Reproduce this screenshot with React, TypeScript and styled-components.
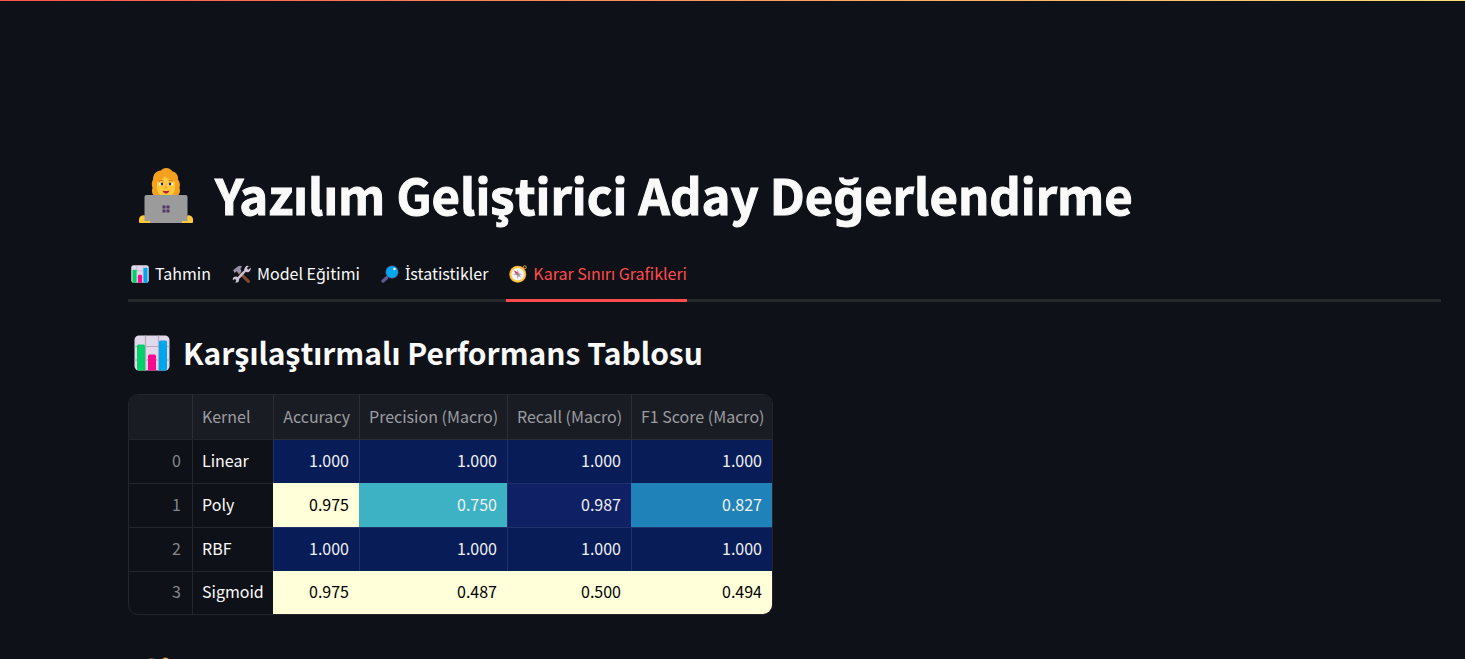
import React from 'react';
import styled, { createGlobalStyle } from 'styled-components';

const GlobalStyle = createGlobalStyle`
  * { box-sizing: border-box; }
  body {
    margin: 0;
    background: #0e1117;
    color: #fafafa;
    font-family: "Noto Sans CJK SC", "Noto Sans", sans-serif;
    font-size: 16px;
  }
`;

const Decoration = styled.div`
  position: absolute;
  top: 0;
  left: 0;
  right: 0;
  height: 1px;
  background: linear-gradient(90deg, #ff544b, #fbe074);
`;

const Page = styled.main`
  position: relative;
  height: 100vh;
  overflow: auto;
  scrollbar-width: none;
  padding: 160px 24px 0 128px;
`;

const Title = styled.h1`
  display: flex;
  align-items: center;
  gap: 18px;
  margin: 0;
  padding-left: 5px;
  height: 72px;
  font-size: 49px;
  line-height: 68px;
  font-weight: 700;
`;

const TitleText = styled.span`
  padding-bottom: 4px;
  -webkit-text-stroke: 1px currentColor;
`;

const TabList = styled.div`
  display: flex;
  gap: 18px;
  margin-top: 16px;
  height: 54px;
  border-bottom: 3px solid #26282c;
`;

const Tab = styled.button<{ $active?: boolean }>`
  display: flex;
  align-items: center;
  gap: 6px;
  height: 54px;
  padding: 0 0 0 3px;
  border: 0;
  border-bottom: 3px solid ${(p) => (p.$active ? '#ff4b4b' : 'transparent')};
  background: none;
  color: ${(p) => (p.$active ? '#ff4b4b' : '#fafafa')};
  font-family: inherit;
  font-size: 16px;
  line-height: 24px;
  white-space: nowrap;
`;

const TabLabel = styled.span`
  height: 24px;
  margin-bottom: 2px;
`;

const DottedCapital = styled.span`
  font-family: "Noto Sans", sans-serif;
  line-height: 16px;
`;

const Section = styled.h2`
  display: flex;
  align-items: center;
  gap: 13px;
  margin: 0;
  padding-left: 6px;
  height: 44px;
  font-size: 30px;
  line-height: 40px;
  font-weight: 700;
`;

const SectionText = styled.span`
  padding-bottom: 2px;
`;

const Panel = styled.section`
  padding-top: 29px;
`;

const Frame = styled.div`
  width: fit-content;
  margin: 19px 0 38px;
  border: 1px solid #23252b;
  border-radius: 10px;
  overflow: hidden;
`;

const Table = styled.table`
  border-collapse: separate;
  border-spacing: 0;
  table-layout: fixed;
  width: 643px;
  font-size: 16px;
  line-height: 24px;
`;

const Head = styled.th<{ $right?: boolean }>`
  height: 44px;
  padding: 0 9px 2px;
  background: #1a1c23;
  color: #9c9da1;
  font-weight: 400;
  text-align: ${(p) => (p.$right ? 'right' : 'left')};
  white-space: nowrap;
  border-left: 1px solid #2c2e34;
  &:first-child { border-left: 0; }
`;

const Index = styled.th`
  height: 44px;
  padding: 0 11px 4px;
  color: #84868a;
  font-weight: 400;
  text-align: right;
  border-top: 1px solid #23252b;
  tr:last-child > & { height: 43px; }
`;

const Name = styled.td`
  padding: 0 9px 4px;
  border-top: 1px solid #23252b;
  border-left: 1px solid #23252b;
`;

const Value = styled.td<{ $bg: string; $fg: string; $line: string }>`
  padding: 0 10px 4px;
  background: ${(p) => p.$bg};
  color: ${(p) => p.$fg};
  text-align: right;
  border-top: 1px solid ${(p) => p.$line};
  border-left: 1px solid ${(p) => p.$line};
  tr:first-child > & { border-top-color: #2c2e34; }
`;

const tones = {
  navy: { bg: '#081d58', fg: '#f1f1f1', line: '#203269' },
  ink: { bg: '#0f2064', fg: '#f1f1f1', line: '#203269' },
  cream: { bg: '#ffffd9', fg: '#000000', line: '#ffffd9' },
  teal: { bg: '#3db2c4', fg: '#f1f1f1', line: '#3db2c4' },
  blue: { bg: '#1f82b9', fg: '#f1f1f1', line: '#1f82b9' },
};

type Cell = [string, keyof typeof tones];

const rows: { name: string; cells: Cell[] }[] = [
  { name: 'Linear', cells: [['1.000', 'navy'], ['1.000', 'navy'], ['1.000', 'navy'], ['1.000', 'navy']] },
  { name: 'Poly', cells: [['0.975', 'cream'], ['0.750', 'teal'], ['0.987', 'ink'], ['0.827', 'blue']] },
  { name: 'RBF', cells: [['1.000', 'navy'], ['1.000', 'navy'], ['1.000', 'navy'], ['1.000', 'navy']] },
  { name: 'Sigmoid', cells: [['0.975', 'cream'], ['0.487', 'cream'], ['0.500', 'cream'], ['0.494', 'cream']] },
];

const Icon = styled.svg`
  display: block;
  flex: none;
`;

const BarChart = ({ size }: { size: number }) => (
  <Icon width={size} height={size} viewBox="0 0 36 36" aria-hidden="true">
    <rect x="0.5" y="0.5" width="35" height="35" rx="4.5" fill="#e1d8ec" />
    <path d="M11.5 0.5V35.5M24.5 0.5V35.5M0.5 11.5H35.5M0.5 25H35.5" stroke="#b4acbc" strokeWidth="1.2" />
    <path d="M3 11a1.5 1.5 0 0 1 1.5-1.5h5a1.5 1.5 0 0 1 1.5 1.5V35.5H5a2 2 0 0 1-2-2z" fill="#00d26a" />
    <path d="M14 21a1.5 1.5 0 0 1 1.5-1.5h5a1.5 1.5 0 0 1 1.5 1.5V35.5h-8z" fill="#f70a8d" />
    <path d="M25 7a1.5 1.5 0 0 1 1.5-1.5h5a1.5 1.5 0 0 1 1.5 1.5V33.5a2 2 0 0 1-2 2h-6z" fill="#00a6ed" />
  </Icon>
);

const Tools = () => (
  <Icon width={19} height={18} viewBox="0 0 36 34" aria-hidden="true">
    <path d="M14 14L31 31" stroke="#83492f" strokeWidth="6" strokeLinecap="round" />
    <path d="M2 10L11 3Q15 0 19 3L16 7L18 12L13 17L9 12L5 15Z" fill="#998ea4" />
    <path d="M8 29L27 9" stroke="#cdc4d6" strokeWidth="4.5" />
    <path d="M25 4Q28 0 32 2L28 6L31 9L35 5Q37 10 32 13Q27 15 24 11Q22 8 25 4Z" fill="#cdc4d6" />
    <path d="M3 23Q8 20 12 24Q15 28 12 32Q9 34 6 33L9 29L6 26L2 29Q0 26 3 23Z" fill="#cdc4d6" />
  </Icon>
);

const Magnifier = () => (
  <Icon width={18} height={18} viewBox="0 0 36 36" aria-hidden="true">
    <path d="M14 22L10 26" stroke="#998ea4" strokeWidth="4" />
    <path d="M4 32L11 26" stroke="#635994" strokeWidth="7" strokeLinecap="round" />
    <circle cx="22" cy="14" r="13.5" fill="#533566" />
    <circle cx="22" cy="14" r="12" fill="#00a6ed" />
    <circle cx="27" cy="8" r="2.5" fill="#fff" />
  </Icon>
);

const Compass = ({ size }: { size: number }) => (
  <Icon width={size} height={size} viewBox="0 0 36 36" aria-hidden="true">
    <circle cx="31.5" cy="4.5" r="3" fill="none" stroke="#e8a33e" strokeWidth="2" />
    <circle cx="17.5" cy="18.5" r="17" fill="#e19747" />
    <circle cx="17.5" cy="18.5" r="16" fill="#fcc93f" />
    <circle cx="17.5" cy="18.5" r="12.5" fill="#f4f4f4" />
    <path d="M17.5 9L19.5 16.5L27 18.5L19.5 20.5L17.5 28L15.5 20.5L8 18.5L15.5 16.5Z" fill="#b4acbc" />
    <path d="M10.5 11.500L19.500 16.500L24.500 25.500L15.500 20.500Z" fill="#aaa3b2" />
    <path d="M10 11L18 15L14 19Z" fill="#f8315f" />
    <circle cx="17.5" cy="18.5" r="2" fill="#8a8494" />
  </Icon>
);

const Technologist = () => (
  <Icon width={64} height={64} viewBox="0 0 64 64" aria-hidden="true">
    <path d="M33 4C36.5 4 38.5 6 39.5 7.5C43.5 8 45.5 12 45 15.5C47.5 19 47 22 46.5 24C48 28 46 31 43 33H23C19.5 31 18 28 19.5 24C18.5 21 18.5 18 20 15.5C20 10 23.5 6.5 28 6.5C29 5 31 4 33 4Z" fill="#f3a11f" />
    <path d="M24 18C29 17 31 13 32 12C34 15 39 17 42 17.5V24C42 29 38 33 33 33C28 33 24 29 24 24Z" fill="#ffc83d" />
    <path d="M26 17.5Q28 15.5 30.5 17M35.5 17Q38 15.5 40 17.5" stroke="#c76d20" fill="none" strokeWidth="1" />
    <ellipse cx="28.5" cy="20" rx="2.6" ry="1.6" fill="#fff" />
    <ellipse cx="37.5" cy="20" rx="2.6" ry="1.6" fill="#fff" />
    <circle cx="29" cy="20" r="1.4" fill="#402a32" />
    <circle cx="37" cy="20" r="1.4" fill="#402a32" />
    <path d="M33 21L31.5 24.5H34.5Z" fill="#f59f1d" />
    <path d="M29.5 26.5Q33 27.5 36.5 26.5Q35.5 29.5 33 29.5Q30.5 29.5 29.5 26.5Z" fill="#bb1d3c" />
    <path d="M6 58V56A4.5 4.5 0 0 1 14 53V58ZM60 58V56A4.5 4.5 0 0 0 52 53V58Z" fill="#ffc83d" />
    <rect x="11.5" y="31" width="43" height="28" rx="2" fill="#9b9b9b" />
    <path d="M6 57H17V59H7.5A1.5 1.5 0 0 1 6 57ZM49 57H60A1.5 1.5 0 0 1 58.5 59H49Z" fill="#ffc83d" />
    <path d="M29.5 41.5h3v3h-3zM33.5 41.5h3v3h-3zM29.5 45.5h3v3h-3zM33.5 45.5h3v3h-3z" fill="#533566" />
  </Icon>
);

export default function App() {
  return (
    <>
      <GlobalStyle />
      <Page>
        <Decoration />
        <Title><Technologist /><TitleText>Yazılım Geliştirici Aday Değerlendirme</TitleText></Title>
        <TabList role="tablist">
          <Tab role="tab" aria-selected="false"><BarChart size={18} /><TabLabel>Tahmin</TabLabel></Tab>
          <Tab role="tab" aria-selected="false"><Tools /><TabLabel>Model Eğitimi</TabLabel></Tab>
          <Tab role="tab" aria-selected="false"><Magnifier /><TabLabel><DottedCapital>İ</DottedCapital>statistikler</TabLabel></Tab>
          <Tab role="tab" aria-selected="true" $active><Compass size={18} /><TabLabel>Karar Sınırı Grafikleri</TabLabel></Tab>
        </TabList>
        <Panel role="tabpanel">
          <Section><BarChart size={36} /><SectionText>Karşılaştırmalı Performans Tablosu</SectionText></Section>
          <Frame>
            <Table>
              <colgroup>
                <col width="63" />
                <col width="81" />
                <col width="86" />
                <col width="148" />
                <col width="124" />
                <col width="141" />
              </colgroup>
              <thead>
                <tr>
                  <Head />
                  <Head scope="col">Kernel</Head>
                  <Head scope="col" $right>Accuracy</Head>
                  <Head scope="col" $right>Precision (Macro)</Head>
                  <Head scope="col" $right>Recall (Macro)</Head>
                  <Head scope="col" $right>F1 Score (Macro)</Head>
                </tr>
              </thead>
              <tbody>
                {rows.map((row, i) => (
                  <tr key={row.name}>
                    <Index scope="row">{i}</Index>
                    <Name>{row.name}</Name>
                    {row.cells.map(([value, tone], j) => (
                      <Value key={j} $bg={tones[tone].bg} $fg={tones[tone].fg} $line={tones[tone].line}>{value}</Value>
                    ))}
                  </tr>
                ))}
              </tbody>
            </Table>
          </Frame>
          <Section><Compass size={36} /></Section>
        </Panel>
      </Page>
    </>
  );
}
